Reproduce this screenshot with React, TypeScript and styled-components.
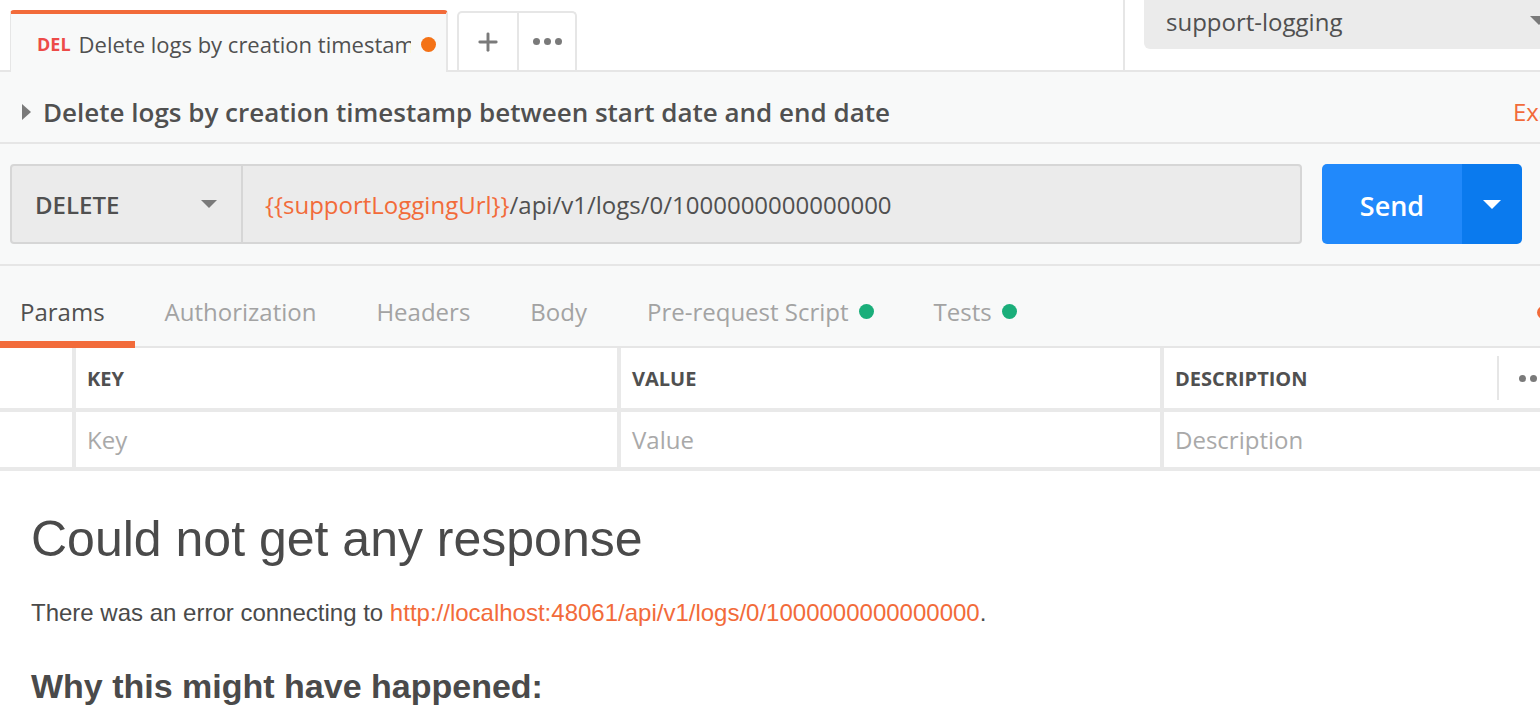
import React from 'react'
import styled, { createGlobalStyle } from 'styled-components'
import { Plus } from 'lucide-react'

const GlobalStyle = createGlobalStyle`
  html, body {
    margin: 0;
    padding: 0;
    background: #ffffff;
  }
  * {
    box-sizing: border-box;
  }
`

const ORANGE = '#f26b3a'
const LINE = '#e6e6e6'
const PANEL = '#f8f9f9'
const TEXT = '#505050'

const Page = styled.div`
  width: 1540px;
  height: 728px;
  overflow: hidden;
  background: #ffffff;
  font-family: 'Open Sans', 'Liberation Sans', sans-serif;
  color: ${TEXT};
`

const TopBar = styled.div`
  display: flex;
  height: 72px;
  border-bottom: 2px solid ${LINE};
  background: #ffffff;
`

const TabStrip = styled.div`
  flex: 0 0 1125px;
  display: flex;
  align-items: flex-end;
  padding-left: 10px;
  border-right: 2px solid ${LINE};
`

const RequestTab = styled.div`
  width: 438px;
  height: 62px;
  margin-bottom: -2px;
  display: flex;
  align-items: center;
  padding: 2px 10px 0 26px;
  background: ${PANEL};
  border-top: 4px solid ${ORANGE};
  border-left: 1px solid ${LINE};
  border-right: 2px solid ${LINE};
  border-radius: 4px 4px 0 0;
  white-space: nowrap;
  overflow: hidden;
`

const MethodTag = styled.span`
  color: #ed4b48;
  font-weight: 700;
  font-size: 18px;
  margin-right: 8px;
`

const TabTitle = styled.span`
  font-size: 22px;
  color: ${TEXT};
  flex: 1;
  overflow: hidden;
  text-overflow: clip;
  margin-right: 10px;
`

const Dot = styled.span<{ $color: string; $size?: number }>`
  display: inline-block;
  flex: none;
  width: ${p => p.$size || 14}px;
  height: ${p => p.$size || 14}px;
  border-radius: 50%;
  background: ${p => p.$color};
`

const TabActions = styled.div`
  display: flex;
  height: 59px;
  margin-left: 9px;
  border: 2px solid ${LINE};
  border-bottom: none;
  border-radius: 5px 5px 0 0;
  background: #ffffff;
`

const ActionButton = styled.div`
  width: 58px;
  display: flex;
  align-items: center;
  justify-content: center;
  color: #7a7a7a;
  & + & {
    border-left: 2px solid ${LINE};
  }
`

const DotsIcon = styled.span`
  display: flex;
  gap: 4px;
  span {
    width: 7px;
    height: 7px;
    border-radius: 50%;
    background: #7a7a7a;
  }
`

const EnvArea = styled.div`
  flex: 1;
  padding-left: 19px;
`

const EnvSelect = styled.div`
  height: 49px;
  background: #ebebeb;
  border-radius: 0 0 0 6px;
  display: flex;
  align-items: center;
  padding: 0 0 6px 22px;
  font-size: 24px;
  color: ${TEXT};
  position: relative;
`

const Caret = styled.span<{ $color?: string; $w?: number }>`
  display: inline-block;
  width: 0;
  height: 0;
  border-left: ${p => (p.$w || 16) / 2}px solid transparent;
  border-right: ${p => (p.$w || 16) / 2}px solid transparent;
  border-top: ${p => (p.$w || 16) / 2}px solid ${p => p.$color || '#7a7a7a'};
`

const EnvCaret = styled(Caret)`
  position: absolute;
  right: -8px;
  top: 16px;
`

const DescBar = styled.div`
  height: 72px;
  display: flex;
  align-items: center;
  padding: 9px 0 0 22px;
  background: ${PANEL};
  border-bottom: 2px solid ${LINE};
`

const RightTriangle = styled.span`
  width: 0;
  height: 0;
  border-top: 8px solid transparent;
  border-bottom: 8px solid transparent;
  border-left: 9px solid #7a7a7a;
  margin-right: 12px;
`

const DescTitle = styled.div`
  font-size: 26px;
  font-weight: 600;
  color: ${TEXT};
  flex: 1;
`

const DescLink = styled.div`
  font-size: 24px;
  color: ${ORANGE};
  width: 27px;
  overflow: hidden;
  white-space: nowrap;
`

const RequestBar = styled.div`
  height: 122px;
  display: flex;
  align-items: center;
  padding: 0 18px 0 10px;
  gap: 20px;
  background: ${PANEL};
  border-bottom: 2px solid ${LINE};
`

const UrlGroup = styled.div`
  flex: 1;
  height: 80px;
  display: flex;
  background: #ebebeb;
  border: 2px solid #d6d6d6;
  border-radius: 4px;
`

const MethodSelect = styled.div`
  width: 231px;
  display: flex;
  align-items: center;
  justify-content: space-between;
  padding: 0 24px 0 23px;
  border-right: 2px solid #d6d6d6;
  font-size: 24px;
  font-weight: 600;
  color: ${TEXT};
`

const UrlInput = styled.div`
  flex: 1;
  display: flex;
  align-items: center;
  padding-left: 22px;
  font-size: 24px;
  color: ${TEXT};
`

const Variable = styled.span`
  color: ${ORANGE};
`

const SendButton = styled.div`
  width: 200px;
  height: 80px;
  display: flex;
  border-radius: 5px;
  overflow: hidden;
  color: #ffffff;
`

const SendLabel = styled.div`
  flex: 1;
  display: flex;
  align-items: center;
  justify-content: center;
  padding-top: 2px;
  background: #2189fb;
  font-size: 27px;
  font-weight: 600;
`

const SendArrow = styled.div`
  width: 60px;
  display: flex;
  align-items: center;
  justify-content: center;
  background: #0a7aee;
`

const TabsRow = styled.div`
  height: 82px;
  display: flex;
  align-items: stretch;
  background: ${PANEL};
  border-bottom: 2px solid ${LINE};
  position: relative;
`

const ReqTab = styled.div<{ $active?: boolean }>`
  display: flex;
  align-items: center;
  gap: 10px;
  padding: 10px 30px 0 30px;
  font-size: 24px;
  color: ${p => (p.$active ? TEXT : '#a3a3a3')};
  position: relative;
  &:first-child {
    padding-left: 20px;
  }
  ${p =>
    p.$active &&
    `
    &::after {
      content: '';
      position: absolute;
      left: 0;
      right: 0;
      bottom: -2px;
      height: 7px;
      background: ${ORANGE};
    }
  `}
`

const EdgeDot = styled(Dot)`
  position: absolute;
  right: -10px;
  top: 40px;
`

const Table = styled.div`
  display: grid;
  grid-template-columns: 72px 545px 543px 1fr;
`

const Cell = styled.div<{ $head?: boolean; $first?: boolean }>`
  height: ${p => (p.$head ? 64 : 59)}px;
  display: flex;
  align-items: center;
  padding-left: ${p => (p.$first ? 0 : 11)}px;
  border-left: ${p => (p.$first ? 'none' : `4px solid #e9e9e9`)};
  border-bottom: 4px solid #e9e9e9;
  background: #ffffff;
  font-size: ${p => (p.$head ? 20 : 24)}px;
  font-weight: ${p => (p.$head ? 700 : 400)};
  color: ${p => (p.$head ? TEXT : '#a9a9a9')};
  position: relative;
`

const BulkEdit = styled.div`
  position: absolute;
  left: 333px;
  top: 8px;
  bottom: 8px;
  border-left: 2px solid #e6e6e6;
  padding-left: 20px;
  display: flex;
  align-items: center;
`

const Response = styled.div`
  padding: 38px 31px 0;
  font-family: 'Liberation Sans', Arial, sans-serif;
  color: ${TEXT};
`

const ResponseTitle = styled.h1`
  margin: 0;
  font-size: 50px;
  font-weight: 400;
  line-height: 60px;
  color: #4a4a4a;
`

const ResponseText = styled.p`
  margin: 29px 0 0;
  font-size: 24px;
  line-height: 30px;
  color: #4a4a4a;
`

const ResponseLink = styled.span`
  color: ${ORANGE};
`

const ResponseSub = styled.h2`
  margin: 38px 0 0;
  font-size: 34px;
  font-weight: 700;
  line-height: 40px;
  color: #4a4a4a;
`

const tabs = [
  { label: 'Params', active: true },
  { label: 'Authorization' },
  { label: 'Headers' },
  { label: 'Body' },
  { label: 'Pre-request Script', dot: true },
  { label: 'Tests', dot: true },
]

export default function App() {
  return (
    <Page>
      <GlobalStyle />
      <TopBar>
        <TabStrip>
          <RequestTab>
            <MethodTag>DEL</MethodTag>
            <TabTitle>Delete logs by creation timestamp between start date and end date</TabTitle>
            <Dot $color="#f47216" $size={15} />
          </RequestTab>
          <TabActions>
            <ActionButton>
              <Plus size={28} strokeWidth={2.5} />
            </ActionButton>
            <ActionButton>
              <DotsIcon>
                <span />
                <span />
                <span />
              </DotsIcon>
            </ActionButton>
          </TabActions>
        </TabStrip>
        <EnvArea>
          <EnvSelect>
            support-logging
            <EnvCaret $w={18} />
          </EnvSelect>
        </EnvArea>
      </TopBar>

      <DescBar>
        <RightTriangle />
        <DescTitle>Delete logs by creation timestamp between start date and end date</DescTitle>
        <DescLink>Examples</DescLink>
      </DescBar>

      <RequestBar>
        <UrlGroup>
          <MethodSelect>
            DELETE
            <Caret $w={16} />
          </MethodSelect>
          <UrlInput>
            <Variable>{'{{supportLoggingUrl}}'}</Variable>/api/v1/logs/0/1000000000000000
          </UrlInput>
        </UrlGroup>
        <SendButton>
          <SendLabel>Send</SendLabel>
          <SendArrow>
            <Caret $color="#ffffff" $w={18} />
          </SendArrow>
        </SendButton>
      </RequestBar>

      <TabsRow>
        {tabs.map(t => (
          <ReqTab key={t.label} $active={t.active}>
            {t.label}
            {t.dot && <Dot $color="#1aae7a" $size={15} />}
          </ReqTab>
        ))}
        <EdgeDot $color={ORANGE} $size={13} />
      </TabsRow>

      <Table>
        <Cell $head $first />
        <Cell $head>KEY</Cell>
        <Cell $head>VALUE</Cell>
        <Cell $head>
          DESCRIPTION
          <BulkEdit>
            <DotsIcon>
              <span />
              <span />
              <span />
            </DotsIcon>
          </BulkEdit>
        </Cell>
        <Cell $first />
        <Cell>Key</Cell>
        <Cell>Value</Cell>
        <Cell>Description</Cell>
      </Table>

      <Response>
        <ResponseTitle>Could not get any response</ResponseTitle>
        <ResponseText>
          There was an error connecting to{' '}
          <ResponseLink>http://localhost:48061/api/v1/logs/0/1000000000000000</ResponseLink>.
        </ResponseText>
        <ResponseSub>Why this might have happened:</ResponseSub>
      </Response>
    </Page>
  )
}
